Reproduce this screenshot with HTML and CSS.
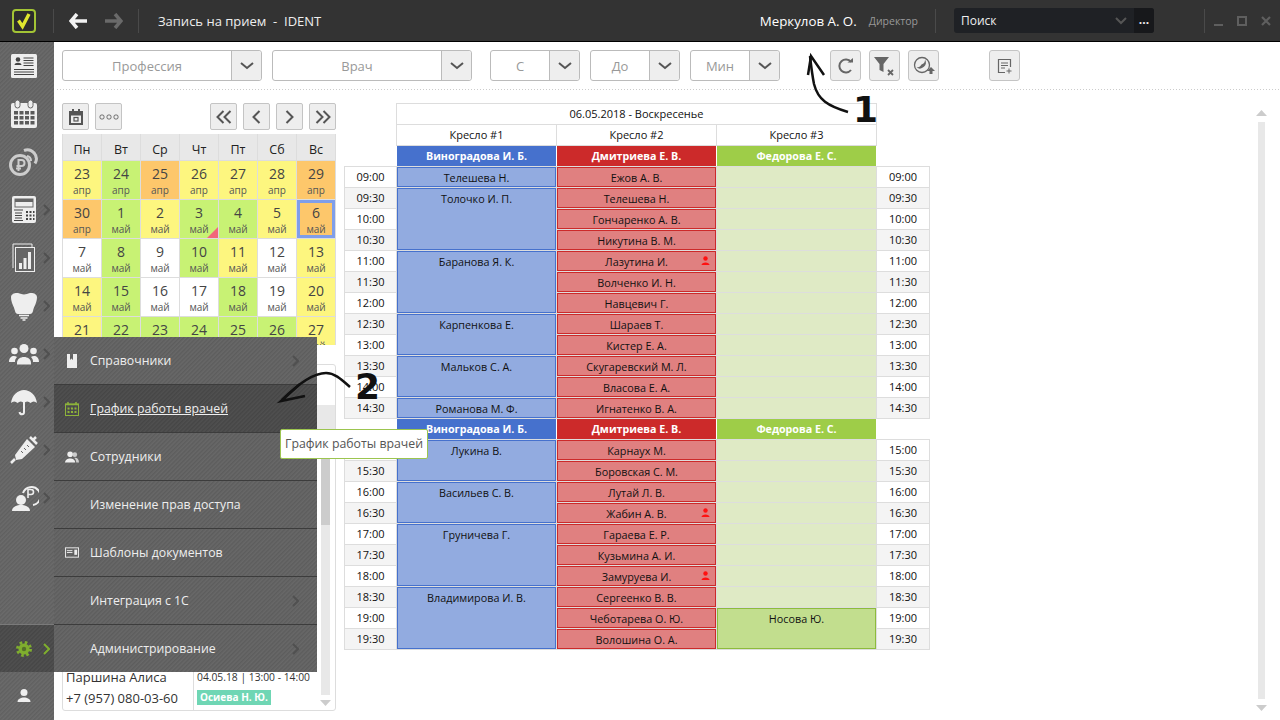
FILE: index.html
```html
<!DOCTYPE html>
<html lang="ru">
<head>
  <meta charset="UTF-8">
  <title>Запись на прием - IDENT</title>
  <link rel="stylesheet" href="styles.css">
</head>
<body>
  <header class="topbar">
    <div class="logo">
      <svg width="24" height="24" viewBox="0 0 24 24"><rect x="1" y="1" width="22" height="22" rx="3" fill="#2c2c2c" stroke="#a3c435" stroke-width="2"/><path d="M6.500 11.500l4 6 6.500-12.500" fill="none" stroke="#dfe62e" stroke-width="3.400"/></svg>
    </div>
    <span class="top-sep sep-logo"></span>
    <svg class="nav-arrow" width="18" height="16" viewBox="0 0 18 16"><path d="M8 1L2 8l6 7M2 8h16" fill="none" stroke="#f2f2f2" stroke-width="3.500"/></svg>
    <svg class="nav-arrow nav-next" width="18" height="16" viewBox="0 0 18 16"><path d="M10 1l6 7-6 7M16 8H0" fill="none" stroke="#6a6a6a" stroke-width="3.500"/></svg>
    <span class="top-sep sep-nav"></span>
    <div class="title">Запись на прием&nbsp; - &nbsp;IDENT</div>
    <div class="user-name">Меркулов А. О.</div>
    <div class="user-role">Директор</div>
    <span class="top-sep sep-user"></span>
    <div class="search">
      <span class="search-text">Поиск</span>
      <svg width="12" height="8" viewBox="0 0 12 8"><path d="M1 1l5 5 5-5" fill="none" stroke="#555" stroke-width="2"/></svg>
      <span class="search-more">...</span>
    </div>
    <span class="top-sep sep-search"></span>
    <div class="win-btns">
      <svg width="12" height="12" viewBox="0 0 12 12"><rect x="2" y="9" width="9" height="2" fill="#5f5f5f"/></svg>
      <svg width="12" height="12" viewBox="0 0 12 12"><rect x="2" y="2" width="8" height="8" fill="none" stroke="#5f5f5f" stroke-width="2"/></svg>
      <svg width="12" height="12" viewBox="0 0 12 12"><path d="M2 2l8 8M10 2l-8 8" stroke="#5f5f5f" stroke-width="2.200"/></svg>
    </div>
  </header>

  <div class="workspace">
    <nav class="sidebar">
      <div class="side-item">
        <svg width="30" height="30" viewBox="0 0 30 30"><rect x="2" y="3" width="26" height="24" rx="1.500" fill="#eee"/><circle cx="9" cy="8.500" r="2.300" fill="#444"/><path d="M5.500 14c0-3 7-3 7 0z" fill="#444"/><path d="M14.500 7h10M14.500 9.500h10M14.500 12h10M14.500 14.500h10M5 18.500h20M5 21h20M5 23.500h20" stroke="#444"/></svg>
      </div>
      <div class="side-item">
        <svg width="30" height="30" viewBox="0 0 30 30"><rect x="2" y="4" width="26" height="25" rx="2" fill="#eee"/><rect x="6" y="1" width="5" height="8" rx="2.500" fill="#eee" stroke="#666"/><rect x="19" y="1" width="5" height="8" rx="2.500" fill="#eee" stroke="#666"/><path d="M5 12h4v3.500H5zM10.500 12h4v3.500h-4zM16 12h4v3.500h-4zM21.500 12h4v3.500h-4zM5 17h4v3.500H5zM10.500 17h4v3.500h-4zM16 17h4v3.500h-4zM21.500 17h4v3.500h-4zM5 22h4v3.500H5zM10.500 22h4v3.500h-4zM16 22h4v3.500h-4zM21.500 22h4v3.500h-4z" fill="#5a5a5a"/></svg>
      </div>
      <div class="side-item">
        <svg width="30" height="30" viewBox="0 0 30 30"><path d="M15 3.500a9 9 0 0 1 11 13" fill="none" stroke="#ccc" stroke-width="3"/><path d="M18 9a5 5 0 0 1 4 5" fill="none" stroke="#ccc" stroke-width="2"/><circle cx="11" cy="18" r="9.500" fill="#666" stroke="#ccc" stroke-width="3"/><path d="M9.500 24v-11h3a2.700 2.700 0 0 1 0 6h-5M7 21.500h5" fill="none" stroke="#ccc" stroke-width="2"/></svg>
      </div>
      <div class="side-item has-sub">
        <svg width="30" height="30" viewBox="0 0 30 30"><rect x="3" y="1" width="24" height="27" rx="2" fill="#eee"/><rect x="5.500" y="3.500" width="19" height="9" fill="#666"/><rect x="6.500" y="7" width="17" height="4.500" fill="#eee"/><path d="M5 15h9M6 18h7M6 20.500h7M6 23h7M5 25.500h9" stroke="#444"/><path d="M17 16h2v2h-2zM20.500 16h2v2h-2zM24 16h1.500v2H24zM17 19.500h2v2h-2zM20.500 19.500h2v2h-2zM24 19.500h1.500v2H24zM17 23h2v2h-2zM20.500 23h2v2h-2zM24 23h1.500v2H24z" fill="#444"/></svg>
        <svg class="chev" width="7" height="12" viewBox="0 0 7 12"><path d="M1 1l5 5-5 5" fill="none" stroke="#505050" stroke-width="2"/></svg>
      </div>
      <div class="side-item has-sub">
        <svg width="30" height="30" viewBox="0 0 30 30"><path d="M4 25V1h19v3" fill="none" stroke="#eee"/><rect x="6.500" y="4.500" width="19" height="24" fill="#666" stroke="#eee"/><path d="M10 26v-6h3v6zM14.500 26V15h3v11zM19 26V9h3v17z" fill="#eee"/></svg>
        <svg class="chev" width="7" height="12" viewBox="0 0 7 12"><path d="M1 1l5 5-5 5" fill="none" stroke="#505050" stroke-width="2"/></svg>
      </div>
      <div class="side-item has-sub">
        <svg width="30" height="30" viewBox="0 0 30 30"><path d="M2 6c0-3 4-4.500 7-4 2.500.4 4 1.500 6 1.500S18.500 2.400 21 2c3-.5 7 1 7 4 0 6-3 9-4 14-.4 2-1.500 3-3 3H9c-1.500 0-2.600-1-3-3C5 15 2 12 2 6z" fill="#eee"/><path d="M10 24.500h10M11.500 27h7M13.500 29h3" stroke="#eee" stroke-width="1.500"/></svg>
        <svg class="chev" width="7" height="12" viewBox="0 0 7 12"><path d="M1 1l5 5-5 5" fill="none" stroke="#505050" stroke-width="2"/></svg>
      </div>
      <div class="side-item has-sub">
        <svg width="30" height="30" viewBox="0 0 30 30"><circle cx="15" cy="9.500" r="4.500" fill="#eee"/><path d="M8 24c0-8 14-8 14 0v1.500H8z" fill="#eee"/><circle cx="5.500" cy="12" r="3.300" fill="#eee"/><path d="M0 23c0-6 5-7 8-5-1.500 1.500-2 3-2 5z" fill="#eee"/><circle cx="24.500" cy="12" r="3.300" fill="#eee"/><path d="M30 23c0-6-5-7-8-5 1.500 1.500 2 3 2 5z" fill="#eee"/></svg>
        <svg class="chev" width="7" height="12" viewBox="0 0 7 12"><path d="M1 1l5 5-5 5" fill="none" stroke="#505050" stroke-width="2"/></svg>
      </div>
      <div class="side-item has-sub">
        <svg width="30" height="30" viewBox="0 0 30 30"><path d="M2 16C3 8 9 3 15 3s12 5 13 13c-2-2-4.500-2-6.500 0-2-2-4.500-2-6.500 0-2-2-4.500-2-6.500 0-2-2-4.500-2-6.500 0z" fill="#eee"/><path d="M15 14v11c0 3-4 3-4.500 0" fill="none" stroke="#eee" stroke-width="2"/></svg>
        <svg class="chev" width="7" height="12" viewBox="0 0 7 12"><path d="M1 1l5 5-5 5" fill="none" stroke="#505050" stroke-width="2"/></svg>
      </div>
      <div class="side-item has-sub">
        <svg width="30" height="30" viewBox="0 0 30 30"><path d="M18 4l8 8-13 12-6 1-1-5z" fill="#eee"/><path d="M6 24l-4 4M21 2l7 7M24 5l3-3" stroke="#eee" stroke-width="2.500"/><path d="M12 16l2 2M15 13l2 2M18 10l2 2" stroke="#666"/></svg>
        <svg class="chev" width="7" height="12" viewBox="0 0 7 12"><path d="M1 1l5 5-5 5" fill="none" stroke="#505050" stroke-width="2"/></svg>
      </div>
      <div class="side-item has-sub">
        <svg width="30" height="30" viewBox="0 0 30 30"><path d="M14 10a9 9 0 1 1 10 12" fill="none" stroke="#eee" stroke-width="2"/><path d="M19 15V6.500h3a2.300 2.300 0 0 1 0 5h-3" fill="none" stroke="#eee" stroke-width="1.600"/><circle cx="12" cy="17" r="5" fill="#eee"/><path d="M3 28c0-8 18-8 18 0z" fill="#eee"/></svg>
        <svg class="chev" width="7" height="12" viewBox="0 0 7 12"><path d="M1 1l5 5-5 5" fill="none" stroke="#505050" stroke-width="2"/></svg>
      </div>
      <div class="side-item side-settings">
        <svg width="30" height="30" viewBox="0 0 30 30"><circle cx="15" cy="15" r="5.500" fill="#7fae2e"/><circle cx="15" cy="15" r="6.500" fill="none" stroke="#7fae2e" stroke-width="3" stroke-dasharray="2.550 2.550"/><circle cx="15" cy="15" r="2.200" fill="#55702a"/></svg>
        <svg class="chev" width="7" height="12" viewBox="0 0 7 12"><path d="M1 1l5 5-5 5" fill="none" stroke="#7fae2e" stroke-width="2"/></svg>
      </div>
      <div class="side-item side-user">
        <svg width="30" height="30" viewBox="0 0 30 30"><circle cx="15" cy="11.500" r="3.500" fill="#eee"/><path d="M8.500 21c0-6 13-6 13 0z" fill="#eee"/></svg>
      </div>
    </nav>

    <div class="content">
      <div class="toolbar">
        <div class="combo combo-wide"><span class="combo-text">Профессия</span><span class="combo-btn"><svg width="14" height="8" viewBox="0 0 14 8"><path d="M1 1l6 5 6-5" fill="none" stroke="#555" stroke-width="2"/></svg></span></div>
        <div class="combo combo-wide"><span class="combo-text">Врач</span><span class="combo-btn"><svg width="14" height="8" viewBox="0 0 14 8"><path d="M1 1l6 5 6-5" fill="none" stroke="#555" stroke-width="2"/></svg></span></div>
        <div class="combo combo-small combo-from"><span class="combo-text">С</span><span class="combo-btn"><svg width="14" height="8" viewBox="0 0 14 8"><path d="M1 1l6 5 6-5" fill="none" stroke="#555" stroke-width="2"/></svg></span></div>
        <div class="combo combo-small"><span class="combo-text">До</span><span class="combo-btn"><svg width="14" height="8" viewBox="0 0 14 8"><path d="M1 1l6 5 6-5" fill="none" stroke="#555" stroke-width="2"/></svg></span></div>
        <div class="combo combo-small"><span class="combo-text">Мин</span><span class="combo-btn"><svg width="14" height="8" viewBox="0 0 14 8"><path d="M1 1l6 5 6-5" fill="none" stroke="#555" stroke-width="2"/></svg></span></div>
        <button class="tool-btn tool-refresh"><svg width="18" height="18" viewBox="0 0 18 18"><path d="M14 5a6.500 6.500 0 1 0 0 8" fill="none" stroke="#666" stroke-width="2"/><path d="M10.500 5.500h5.500V1z" fill="#666"/></svg></button>
        <button class="tool-btn"><svg width="24" height="22" viewBox="0 0 24 22"><path d="M1 2h15l-5.500 7v8l-4-2V9z" fill="#666"/><path d="M15 15l5 5M20 15l-5 5" stroke="#666" stroke-width="1.800"/></svg></button>
        <button class="tool-btn"><svg width="24" height="22" viewBox="0 0 24 22"><circle cx="10" cy="10" r="7.500" fill="none" stroke="#666" stroke-width="1.300"/><path d="M13 4.500a6 6 0 0 1-8.500 8 5.500 5.500 0 0 0 5-3 5 5 0 0 0 3.500-5z" fill="#666"/><path d="M19 12l4 4h-2.500v3h-3v-3H15z" fill="#666"/></svg></button>
        <button class="tool-btn tool-note"><svg width="18" height="18" viewBox="0 0 18 18"><path d="M9 15.500H2.500v-13h12V10" fill="none" stroke="#666" stroke-width="1.200"/><path d="M5 6h7M5 8.500h7M5 11h4" stroke="#666"/><path d="M13 11.500v5M10.500 14h5" stroke="#666"/></svg></button>
      </div>
      <div class="dotted"></div>

      <div class="main">
        <div class="left-col">
          <div class="cal-tools">
            <button class="cal-btn"><svg width="14" height="16" viewBox="0 0 14 16"><rect x="1" y="3" width="12" height="12" fill="none" stroke="#555" stroke-width="2"/><path d="M1 5h12" stroke="#555" stroke-width="3"/><path d="M4 0v3M10 0v3" stroke="#555" stroke-width="2"/><rect x="5" y="8.500" width="4" height="3.500" fill="none" stroke="#555" stroke-width="1.200"/></svg></button>
            <button class="cal-btn"><svg width="20" height="6" viewBox="0 0 20 6"><rect x="1" y="1" width="4" height="4" rx="1.500" fill="none" stroke="#666"/><rect x="8" y="1" width="4" height="4" rx="1.500" fill="none" stroke="#666"/><rect x="15" y="1" width="4" height="4" rx="1.500" fill="none" stroke="#666"/></svg></button>
            <span class="cal-spacer"></span>
            <button class="cal-btn"><svg width="16" height="14" viewBox="0 0 16 14"><path d="M7.500 1l-6 6 6 6M14.500 1l-6 6 6 6" fill="none" stroke="#555" stroke-width="2"/></svg></button>
            <button class="cal-btn"><svg width="9" height="14" viewBox="0 0 9 14"><path d="M7.500 1l-6 6 6 6" fill="none" stroke="#555" stroke-width="2"/></svg></button>
            <button class="cal-btn"><svg width="9" height="14" viewBox="0 0 9 14"><path d="M1.500 1l6 6-6 6" fill="none" stroke="#555" stroke-width="2"/></svg></button>
            <button class="cal-btn"><svg width="16" height="14" viewBox="0 0 16 14"><path d="M1.500 1l6 6-6 6M8.500 1l6 6-6 6" fill="none" stroke="#555" stroke-width="2"/></svg></button>
          </div>

          <div class="calendar">
            <div class="dow">Пн</div><div class="dow">Вт</div><div class="dow">Ср</div><div class="dow">Чт</div><div class="dow">Пт</div><div class="dow">Сб</div><div class="dow">Вс</div>
            <div class="day yellow"><b>23</b><span>апр</span></div>
            <div class="day green"><b>24</b><span>апр</span></div>
            <div class="day orange"><b>25</b><span>апр</span></div>
            <div class="day yellow"><b>26</b><span>апр</span></div>
            <div class="day yellow"><b>27</b><span>апр</span></div>
            <div class="day yellow"><b>28</b><span>апр</span></div>
            <div class="day orange"><b>29</b><span>апр</span></div>
            <div class="day orange"><b>30</b><span>апр</span></div>
            <div class="day green"><b>1</b><span>май</span></div>
            <div class="day yellow"><b>2</b><span>май</span></div>
            <div class="day green flagged"><b>3</b><span>май</span></div>
            <div class="day green"><b>4</b><span>май</span></div>
            <div class="day yellow"><b>5</b><span>май</span></div>
            <div class="day orange selected"><b>6</b><span>май</span></div>
            <div class="day"><b>7</b><span>май</span></div>
            <div class="day green"><b>8</b><span>май</span></div>
            <div class="day"><b>9</b><span>май</span></div>
            <div class="day green"><b>10</b><span>май</span></div>
            <div class="day yellow"><b>11</b><span>май</span></div>
            <div class="day"><b>12</b><span>май</span></div>
            <div class="day yellow"><b>13</b><span>май</span></div>
            <div class="day yellow"><b>14</b><span>май</span></div>
            <div class="day green"><b>15</b><span>май</span></div>
            <div class="day"><b>16</b><span>май</span></div>
            <div class="day"><b>17</b><span>май</span></div>
            <div class="day green"><b>18</b><span>май</span></div>
            <div class="day"><b>19</b><span>май</span></div>
            <div class="day yellow"><b>20</b><span>май</span></div>
            <div class="day yellow last"><b>21</b><span>май</span></div>
            <div class="day green last"><b>22</b><span>май</span></div>
            <div class="day green last"><b>23</b><span>май</span></div>
            <div class="day green last"><b>24</b><span>май</span></div>
            <div class="day green last"><b>25</b><span>май</span></div>
            <div class="day green last"><b>26</b><span>май</span></div>
            <div class="day yellow last"><b>27</b><span>май</span></div>
          </div>

          <div class="recent">
            <div class="recent-head"></div>
            <div class="recent-body">
              <div class="recent-list">
                <div class="recent-row">
                  <div class="recent-name">Паршина Алиса<br>+7 (957) 080-03-60</div>
                  <div class="recent-visit">04.05.18 | 13:00 - 14:00<br><span class="tag">Осиева Н. Ю.</span></div>
                </div>
              </div>
              <div class="mini-scroll">
                <span class="mini-track"><span class="mini-thumb"></span></span>
                <svg width="11" height="6" viewBox="0 0 11 6"><path d="M0 0h11L5.500 6z" fill="#ccc"/></svg>
              </div>
            </div>
          </div>
        </div>

        <div class="schedule">
          <div class="cell head head-date">06.05.2018 - Воскресенье</div>
          <div class="cell head chair-first">Кресло #1</div><div class="cell head">Кресло #2</div><div class="cell head">Кресло #3</div>
          <div class="cell doc doc-blue chair-first">Виноградова И. Б.</div><div class="cell doc doc-red">Дмитриева Е. В.</div><div class="cell doc doc-green">Федорова Е. С.</div>

          <div class="cell time t-left">09:00</div><div class="cell ap blue">Телешева Н.</div><div class="cell ap red">Ежов А. В.</div><div class="cell free"></div><div class="cell time t-right">09:00</div>
          <div class="cell time t-left alt">09:30</div><div class="cell ap blue span3">Толочко И. П.</div><div class="cell ap red">Телешева Н.</div><div class="cell free"></div><div class="cell time t-right alt">09:30</div>
          <div class="cell time t-left">10:00</div><div class="cell ap red">Гончаренко А. В.</div><div class="cell free"></div><div class="cell time t-right">10:00</div>
          <div class="cell time t-left alt">10:30</div><div class="cell ap red">Никутина В. М.</div><div class="cell free"></div><div class="cell time t-right alt">10:30</div>
          <div class="cell time t-left">11:00</div><div class="cell ap blue span3">Баранова Я. К.</div><div class="cell ap red mark">Лазутина И.<svg class="mark-icon" width="9" height="9" viewBox="0 0 9 9"><circle cx="4.500" cy="2.500" r="2.200" fill="#f11"/><path d="M.5 9c0-3.500 8-3.500 8 0z" fill="#f11"/></svg></div><div class="cell free"></div><div class="cell time t-right">11:00</div>
          <div class="cell time t-left alt">11:30</div><div class="cell ap red">Волченко И. Н.</div><div class="cell free"></div><div class="cell time t-right alt">11:30</div>
          <div class="cell time t-left">12:00</div><div class="cell ap red">Навцевич Г.</div><div class="cell free"></div><div class="cell time t-right">12:00</div>
          <div class="cell time t-left alt">12:30</div><div class="cell ap blue span2">Карпенкова Е.</div><div class="cell ap red">Шараев Т.</div><div class="cell free"></div><div class="cell time t-right alt">12:30</div>
          <div class="cell time t-left">13:00</div><div class="cell ap red">Кистер Е. А.</div><div class="cell free"></div><div class="cell time t-right">13:00</div>
          <div class="cell time t-left alt">13:30</div><div class="cell ap blue span2">Мальков С. А.</div><div class="cell ap red">Скугаревский М. Л.</div><div class="cell free"></div><div class="cell time t-right alt">13:30</div>
          <div class="cell time t-left">14:00</div><div class="cell ap red">Власова Е. А.</div><div class="cell free"></div><div class="cell time t-right">14:00</div>
          <div class="cell time t-left alt">14:30</div><div class="cell ap blue">Романова М. Ф.</div><div class="cell ap red">Игнатенко В. А.</div><div class="cell free"></div><div class="cell time t-right alt">14:30</div>

          <div class="cell doc doc-blue chair-first">Виноградова И. Б.</div><div class="cell doc doc-red">Дмитриева Е. В.</div><div class="cell doc doc-green">Федорова Е. С.</div>

          <div class="cell time t-left">15:00</div><div class="cell ap blue span2">Лукина В.</div><div class="cell ap red">Карнаух М.</div><div class="cell free"></div><div class="cell time t-right">15:00</div>
          <div class="cell time t-left alt">15:30</div><div class="cell ap red">Боровская С. М.</div><div class="cell free"></div><div class="cell time t-right alt">15:30</div>
          <div class="cell time t-left">16:00</div><div class="cell ap blue span2">Васильев С. В.</div><div class="cell ap red">Лутай Л. В.</div><div class="cell free"></div><div class="cell time t-right">16:00</div>
          <div class="cell time t-left alt">16:30</div><div class="cell ap red mark">Жабин А. В.<svg class="mark-icon" width="9" height="9" viewBox="0 0 9 9"><circle cx="4.500" cy="2.500" r="2.200" fill="#f11"/><path d="M.5 9c0-3.500 8-3.500 8 0z" fill="#f11"/></svg></div><div class="cell free"></div><div class="cell time t-right alt">16:30</div>
          <div class="cell time t-left">17:00</div><div class="cell ap blue span3">Груничева Г.</div><div class="cell ap red">Гараева Е. Р.</div><div class="cell free"></div><div class="cell time t-right">17:00</div>
          <div class="cell time t-left alt">17:30</div><div class="cell ap red">Кузьмина А. И.</div><div class="cell free"></div><div class="cell time t-right alt">17:30</div>
          <div class="cell time t-left">18:00</div><div class="cell ap red mark">Замуруева И.<svg class="mark-icon" width="9" height="9" viewBox="0 0 9 9"><circle cx="4.500" cy="2.500" r="2.200" fill="#f11"/><path d="M.5 9c0-3.500 8-3.500 8 0z" fill="#f11"/></svg></div><div class="cell free"></div><div class="cell time t-right">18:00</div>
          <div class="cell time t-left alt">18:30</div><div class="cell ap blue span3">Владимирова И. В.</div><div class="cell ap red">Сергеенко В. В.</div><div class="cell free"></div><div class="cell time t-right alt">18:30</div>
          <div class="cell time t-left">19:00</div><div class="cell ap red">Чеботарева О. Ю.</div><div class="cell ap green span2">Носова Ю.</div><div class="cell time t-right">19:00</div>
          <div class="cell time t-left alt">19:30</div><div class="cell ap red">Волошина О. А.</div><div class="cell time t-right alt">19:30</div>
        </div>

        <div class="main-scroll">
          <svg width="11" height="6" viewBox="0 0 11 6"><path d="M0 6h11L5.500 0z" fill="#ccc"/></svg>
          <span class="main-track"></span>
          <svg width="11" height="6" viewBox="0 0 11 6"><path d="M0 0h11L5.500 6z" fill="#ccc"/></svg>
        </div>
      </div>
    </div>
  </div>

  <!-- всплывающее меню поверх календаря -->
  <div class="menu">
    <div class="menu-row">
      <svg width="14" height="16" viewBox="0 0 14 16"><path d="M2 1h3v6l1.500-1.500L8 7V1h4v14H2z" fill="#eee"/></svg>
      <span>Справочники</span>
      <svg class="menu-chev" width="7" height="12" viewBox="0 0 7 12"><path d="M1 1l5 5-5 5" fill="none" stroke="#505050" stroke-width="2"/></svg>
    </div>
    <div class="menu-row active">
      <svg width="14" height="14" viewBox="0 0 14 14"><rect x=".5" y="2" width="13" height="11.500" fill="none" stroke="#8db33a"/><path d="M0 2.500h14M3 0v2M11 0v2" stroke="#8db33a" stroke-width="1.500"/><path d="M2.500 5.500h2v2h-2zM6 5.500h2v2H6zM9.500 5.500h2v2h-2zM2.500 9h2v2h-2zM6 9h2v2H6zM9.500 9h2v2h-2z" fill="#8db33a"/></svg>
      <span>График работы врачей</span>
    </div>
    <div class="menu-row">
      <svg width="15" height="14" viewBox="0 0 15 14"><circle cx="5.500" cy="4" r="3" fill="#eee"/><path d="M0 13c0-6 11-6 11 0z" fill="#eee"/><circle cx="10.500" cy="4.500" r="2.500" fill="#ccc"/><path d="M12 13c0-3-1-4-2-5 3-.5 5 1.500 5 5z" fill="#ccc"/></svg>
      <span>Сотрудники</span>
    </div>
    <div class="menu-row"><span class="menu-noicon">Изменение прав доступа</span></div>
    <div class="menu-row">
      <svg width="15" height="11" viewBox="0 0 15 11"><rect x=".5" y=".5" width="14" height="10" fill="none" stroke="#eee"/><path d="M2 3.500h6M2 5.500h6" stroke="#eee"/><rect x="10" y="2.500" width="3" height="5.500" fill="#eee"/></svg>
      <span>Шаблоны документов</span>
    </div>
    <div class="menu-row">
      <span class="menu-noicon">Интеграция с 1С</span>
      <svg class="menu-chev" width="7" height="12" viewBox="0 0 7 12"><path d="M1 1l5 5-5 5" fill="none" stroke="#505050" stroke-width="2"/></svg>
    </div>
    <div class="menu-row">
      <span class="menu-noicon">Администрирование</span>
      <svg class="menu-chev" width="7" height="12" viewBox="0 0 7 12"><path d="M1 1l5 5-5 5" fill="none" stroke="#505050" stroke-width="2"/></svg>
    </div>
  </div>

  <div class="tooltip">График работы врачей</div>

  <!-- пометки от руки -->
  <svg class="sketch" width="1280" height="720" viewBox="0 0 1280 720">
    <path d="M848 112C828 106 818 100 814 84 812 74 811 65 810 56" fill="none" stroke="#111" stroke-width="2.500"/>
    <path d="M808 75L811 56 824 75" fill="none" stroke="#111" stroke-width="2.500"/>
    <path d="M350 387C340 378 334 373 326 373 314 373 300 382 282 400" fill="none" stroke="#111" stroke-width="2.500"/>
    <path d="M300 384L281 401 305 396" fill="none" stroke="#111" stroke-width="2.500"/>
  </svg>
  <span class="note note-one">1</span>
  <span class="note note-two">2</span>
</body>
</html>
```

FILE: styles.css
```css
* {
  box-sizing: border-box;
}

html, body {
  margin: 0;
  height: 720px;
  overflow: hidden;
}

body {
  font-family: "Open Sans", "Noto Sans", sans-serif;
  font-size: 10.8px;
  color: #111;
  background: white;
  display: flex;
  flex-direction: column;
}

svg {
  display: block;
  flex: none;
}

/* top bar */
.topbar {
  height: 42px;
  flex: none;
  background: #333;
  border-bottom: 1px solid #000;
  display: flex;
  align-items: center;
  color: #eee;
}

.logo {
  margin-left: 12px;
}

.top-sep {
  width: 1px;
  height: 24px;
  background: #4a4a4a;
}

.sep-logo {
  margin-left: 17px;
}

.nav-arrow {
  margin-left: 15px;
}

.nav-next {
  margin-left: 18px;
}

.sep-nav {
  margin-left: 15px;
}

.title {
  margin-left: 19px;
  font-size: 13px;
  white-space: nowrap;
}

.user-name {
  margin-left: auto;
  font-size: 13.3px;
  color: white;
}

.user-role {
  margin-left: 12px;
  font-size: 10.5px;
  color: #999;
}

.sep-user {
  margin-left: 17px;
}

.search {
  margin-left: 18px;
  width: 200px;
  height: 25px;
  background: #1f2125;
  border-radius: 3px;
  display: flex;
  align-items: center;
  font-size: 12px;
  padding-left: 7px;
}

.search-text {
  flex: 1;
}

.search-more {
  width: 20px;
  height: 100%;
  margin-left: 7px;
  background: #17181b;
  border-radius: 0 3px 3px 0;
  text-align: center;
  font-weight: bold;
  line-height: 24px;
}

.sep-search {
  margin-left: 50px;
}

.win-btns {
  display: flex;
  gap: 12px;
  margin-left: 7px;
  margin-right: 8px;
}

/* sidebar */
.workspace {
  flex: 1;
  display: flex;
  min-height: 0;
}

.sidebar {
  width: 54px;
  flex: none;
  display: flex;
  flex-direction: column;
  background: repeating-linear-gradient(135deg, #676767 0, #6b6b6b 1px, #606060 2px, #666 3px);
}

.side-item {
  height: 48px;
  flex: none;
  display: flex;
  align-items: center;
  padding-left: 9px;
}

.chev {
  margin-left: 4px;
}

.side-settings {
  margin-top: auto;
  background: repeating-linear-gradient(135deg, #4c4c4c 0, #505050 1px, #464646 2px, #4b4b4b 3px);
  border-top: 1px solid #7a7a7a;
}

/* toolbar */
.content {
  flex: 1;
  min-width: 0;
  display: flex;
  flex-direction: column;
}

.toolbar {
  height: 47px;
  flex: none;
  display: flex;
  align-items: flex-start;
  padding: 8px 0 0 8px;
}

.combo {
  height: 31px;
  width: 200px;
  margin-right: 10px;
  display: flex;
  border: 1px solid #bbb;
  border-radius: 3px;
  background: white;
}

.combo-small {
  width: 90px;
}

.combo-from {
  margin-left: 8px;
}

.combo-text {
  flex: 1;
  text-align: center;
  line-height: 31px;
  font-size: 13px;
  color: #999;
}

.combo-btn {
  width: 30px;
  background: #eee;
  border-left: 1px solid #bbb;
  border-radius: 0 3px 3px 0;
  display: flex;
  align-items: center;
  justify-content: center;
}

.tool-btn {
  width: 31px;
  height: 31px;
  margin-right: 8px;
  padding: 0;
  background: #eee;
  border: 1px solid #c4c4c4;
  border-radius: 3px;
  display: flex;
  align-items: center;
  justify-content: center;
}

.tool-refresh {
  margin-left: 40px;
}

.tool-note {
  margin-left: 42px;
}

.dotted {
  height: 1px;
  margin-left: 3px;
  flex: none;
  background: repeating-linear-gradient(90deg, #ccc 0, #ccc 1px, transparent 1px, transparent 3px);
}

/* main area */
.main {
  flex: 1;
  min-height: 0;
  display: flex;
  align-items: flex-start;
  padding: 13px 13px 0 8px;
}

.left-col {
  width: 274px;
  flex: none;
}

.cal-tools {
  display: flex;
  gap: 6px;
}

.cal-spacer {
  flex: 1;
}

.cal-btn {
  width: 27px;
  height: 27px;
  padding: 0;
  background: #eee;
  border: 1px solid #c4c4c4;
  border-radius: 2px;
  display: flex;
  align-items: center;
  justify-content: center;
}

.calendar {
  margin-top: 4px;
  display: grid;
  grid-template-columns: repeat(7, 38px);
  grid-template-rows: 26px repeat(4, 38px) 28px;
  gap: 1px;
  padding: 0 1px;
  background: #ddd;
  overflow: hidden;
}

.dow {
  background: #e8e8e8;
  text-align: center;
  font-size: 12.5px;
  line-height: 32px;
  color: #222;
  height: 26px;
  overflow: hidden;
}

.day {
  position: relative;
  background: white;
  display: flex;
  flex-direction: column;
  align-items: center;
  padding-top: 4px;
  color: #444;
  overflow: hidden;
}

.day b {
  font-weight: normal;
  font-size: 14px;
  line-height: 18px;
}

.day span {
  font-size: 10px;
  line-height: 14px;
  color: #555;
}

.yellow { background: #fdf67f; }
.green { background: #c8f274; }
.orange { background: #fdc76b; }

.selected {
  border: 3px solid #7f9eea;
  padding-top: 1px;
}

.flagged::after {
  content: "";
  position: absolute;
  right: 0;
  bottom: 0;
  border-style: solid;
  border-width: 0 0 11px 11px;
  border-color: transparent transparent #f2677a transparent;
}

.recent {
  margin-top: 19px;
  height: 347px;
  border: 1px solid #ddd;
  border-radius: 3px;
  display: flex;
  flex-direction: column;
  padding-top: 40px;
}

.recent-head {
  height: 24px;
  flex: none;
  background: #e8e8e8;
}

.recent-body {
  flex: 1;
  display: flex;
  min-height: 0;
}

.recent-list {
  flex: 1;
  display: flex;
  flex-direction: column;
  justify-content: flex-end;
  min-width: 0;
}

.recent-row {
  height: 44px;
  display: flex;
  color: #333;
}

.recent-name {
  width: 130px;
  padding: 1px 0 0 3px;
  font-size: 13px;
  line-height: 20.500px;
}

.recent-visit {
  flex: 1;
  border-left: 1px solid #ddd;
  padding: 1px 0 0 3px;
  font-size: 10.300px;
  line-height: 20px;
  white-space: nowrap;
}

.tag {
  display: inline-block;
  padding: 0 3px;
  line-height: 15px;
  font-size: 10px;
  background: #6fd6b4;
  color: white;
  font-weight: bold;
}

.mini-scroll {
  width: 14px;
  flex: none;
  display: flex;
  flex-direction: column;
  align-items: center;
  padding: 1px 0 4px;
  margin-right: 3px;
  gap: 5px;
}

.mini-track {
  flex: 1;
  width: 9px;
  background: #e8e8e8;
}

.mini-thumb {
  display: block;
  height: 95px;
  background: #ccc;
}

/* schedule */
.schedule {
  margin: 1px 0 0 9px;
  display: grid;
  grid-template-columns: 51px 159px 159px 159px 52px;
  grid-auto-rows: 20px;
  gap: 1px;
  flex: none;
}

.cell {
  position: relative;
  outline: 1px solid #ddd;
  background: white;
  text-align: center;
  line-height: 20px;
  white-space: nowrap;
}

.head {
  font-size: 11px;
}

.head-date {
  grid-column: 2 / 5;
}

.chair-first {
  grid-column: 2;
}

.doc {
  font-weight: bold;
  font-size: 10.700px;
  color: white;
  outline: none;
}

.doc-blue { background: #4671cd; }
.doc-red { background: #cc2a2a; }
.doc-green { background: #9ecd48; }

.time {
  font-size: 11px;
}

.alt {
  background: #f4f4f4;
}

.t-left {
  grid-column: 1;
}

.t-right {
  grid-column: 5;
}

.ap {
  line-height: 19px;
  border: 1px solid;
}

.blue {
  background: #92abe0;
  border-color: #4671cd;
}

.red {
  background: #e08080;
  border-color: #cc2a2a;
}

.ap.green {
  background: #c2de8e;
  border-color: #8dbb3c;
}

.free {
  background: #dfeac5;
}

.span2 {
  grid-row: span 2;
}

.span3 {
  grid-row: span 3;
}

.mark-icon {
  position: absolute;
  right: 5px;
  top: 4px;
}

.main-scroll {
  margin-left: auto;
  width: 11px;
  height: 601px;
  margin-top: 7px;
  display: flex;
  flex-direction: column;
  align-items: center;
  gap: 6px;
}

.main-track {
  flex: 1;
  width: 7px;
  background: #e8e8e8;
}

/* popup menu and overlays */
.menu {
  position: absolute;
  left: 54px;
  top: 337px;
  width: 263px;
  background: repeating-linear-gradient(135deg, #646464 0, #686868 1px, #5d5d5d 2px, #636363 3px);
  font-size: 12.300px;
  color: #eee;
}

.menu-row {
  height: 48px;
  display: flex;
  align-items: center;
  padding-left: 11px;
  border-bottom: 1px solid #3c3c3c;
}

.menu-row:last-child {
  height: 47px;
  border-bottom: none;
}

.menu-row > svg:first-child {
  margin-right: 11px;
  width: 14px;
}

.menu-noicon {
  margin-left: 25px;
}

.menu-chev {
  margin-left: auto;
  margin-right: 18px;
}

.active {
  background: repeating-linear-gradient(135deg, #4c4c4c 0, #505050 1px, #464646 2px, #4b4b4b 3px);
  text-decoration: underline;
}

.tooltip {
  position: absolute;
  left: 280px;
  top: 429px;
  width: 148px;
  height: 30px;
  background: white;
  border: 1px solid #9cc54f;
  border-radius: 2px;
  font-size: 12.300px;
  line-height: 28px;
  text-align: center;
  color: #555;
}

.sketch {
  position: absolute;
  left: 0;
  top: 0;
  pointer-events: none;
}

.note {
  position: absolute;
  font-family: "DejaVu Sans", sans-serif;
  font-weight: bold;
  font-size: 36px;
  line-height: 36px;
  color: #111;
}

.note-one {
  left: 853px;
  top: 92px;
}

.note-two {
  left: 355px;
  top: 369px;
}
```
